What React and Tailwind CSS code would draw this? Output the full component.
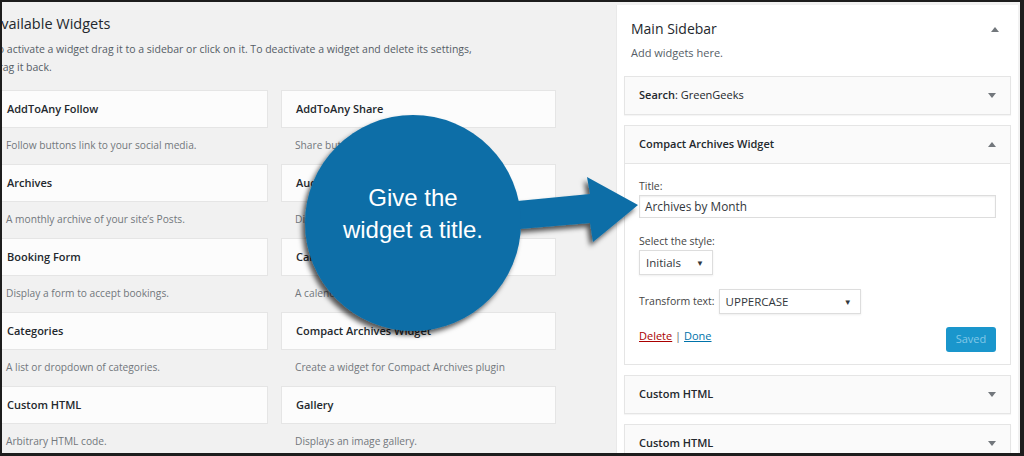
const widgets = [
  { title: 'AddToAny Follow', desc: 'Follow buttons link to your social media.' },
  { title: 'AddToAny Share', desc: 'Share buttons for sharing your content.' },
  { title: 'Archives', desc: "A monthly archive of your site\u2019s Posts." },
  { title: 'Audio', desc: 'Displays an audio player.' },
  { title: 'Booking Form', desc: 'Display a form to accept bookings.' },
  { title: 'Calendar', desc: "A calendar of your site\u2019s Posts." },
  { title: 'Categories', desc: 'A list or dropdown of categories.' },
  { title: 'Compact Archives Widget', desc: 'Create a widget for Compact Archives plugin' },
  { title: 'Custom HTML', desc: 'Arbitrary HTML code.' },
  { title: 'Gallery', desc: 'Displays an image gallery.' },
];

function Caret({ up }) {
  return (
    <svg width="8" height="5" viewBox="0 0 8 5" className="shrink-0">
      {up ? <polygon points="0,5 8,5 4,0" fill="#72777c" /> : <polygon points="0,0 8,0 4,5" fill="#72777c" />}
    </svg>
  );
}

function SidebarWidget({ name, extra, up }) {
  return (
    <div className="h-[39px] border border-[#e5e5e5] bg-[#fafafa] pl-[14px] pr-[14px] flex items-center justify-between shadow-[0_1px_1px_rgba(0,0,0,0.04)]">
      <span className="text-[11px] text-[#23282d]">
        <span className="font-semibold">{name}</span>
        {extra && <span>{extra}</span>}
      </span>
      <Caret up={up} />
    </div>
  );
}

function Callout() {
  return (
    <svg width="1024" height="456" viewBox="0 0 1024 456" className="absolute left-0 top-0 pointer-events-none">
      <defs>
        <filter id="sh" x="-20%" y="-20%" width="140%" height="140%">
          <feDropShadow dx="-3" dy="4" stdDeviation="2.5" floodColor="#000" floodOpacity="0.65" />
        </filter>
      </defs>
      <g filter="url(#sh)" fill="#0c6ea7">
        <polygon points="495,201 588,192 585,175 636,203 591,240 588,221 495,229" />
        <circle cx="411" cy="221" r="108" />
      </g>
      <text x="411" y="204" textAnchor="middle" fill="#fff" fontSize="24" fontFamily="'Liberation Sans', Arial, sans-serif">
        Give the
      </text>
      <text x="411" y="236" textAnchor="middle" fill="#fff" fontSize="24" fontFamily="'Liberation Sans', Arial, sans-serif">
        widget a title.
      </text>
    </svg>
  );
}

export default function App() {
  return (
    <div className="relative w-[1024px] h-[456px] overflow-hidden border-t-2 border-l-2 border-r-4 border-b-[3px] border-[#1d1d1d] font-['Open_Sans',sans-serif]">
      <div className="flex h-full bg-[#f1f1f1]">
        {/* available widgets */}
        <div className="w-[614px] shrink-0 overflow-hidden">
          <div className="ml-[-10px] pt-[12px]">
            <h2 className="text-[14.5px] leading-[20px] text-[#23282d]">Available Widgets</h2>
            <p className="mt-[6px] text-[10.5px] leading-[18px] text-[#555d66] whitespace-nowrap">
              To activate a widget drag it to a sidebar or click on it. To deactivate a widget and delete its settings,
              <br />
              drag it back.
            </p>
            <div className="mt-[14px] grid grid-cols-[276px_275px] gap-x-[13px]">
              {widgets.map((w) => (
                <div key={w.title}>
                  <div className="h-[38px] border border-[#e5e5e5] bg-[#fcfcfc] px-[14px] flex items-center">
                    <span className="text-[11px] font-semibold text-[#23282d]">{w.title}</span>
                  </div>
                  <div className="h-[36px] pt-[10px] pl-[14px] text-[10.2px] leading-[14px] text-[#72777c] whitespace-nowrap">
                    {w.desc}
                  </div>
                </div>
              ))}
            </div>
          </div>
        </div>

        {/* main sidebar */}
        <div className="w-[402px] shrink-0 mt-[3px] bg-white px-[7px] border-l border-[#e9e9e9]">
          <div className="pt-[14px] pl-[7px] pr-[12px] flex items-center justify-between">
            <h2 className="text-[14px] leading-[20px] text-[#23282d]">Main Sidebar</h2>
            <Caret up />
          </div>
          <p className="mt-[6px] pl-[7px] text-[11px] leading-[16px] text-[#555d66]">Add widgets here.</p>

          <div className="mt-[15px]">
            <SidebarWidget name="Search" extra=": GreenGeeks" />
          </div>

          <div className="mt-[10px] border border-[#e5e5e5] bg-white">
            <div className="h-[38px] border-b border-[#e5e5e5] bg-[#fafafa] px-[14px] flex items-center justify-between">
              <span className="text-[11px] font-semibold text-[#23282d]">Compact Archives Widget</span>
              <Caret up />
            </div>
            <div className="px-[14px] pt-[14px] pb-[12px] text-[10.5px] text-[#444]">
              <label className="block leading-[16px]">Title:</label>
              <div className="mt-[1px] h-[23px] border border-[#ddd] shadow-[inset_0_1px_2px_rgba(0,0,0,0.07)] px-[5px] flex items-center text-[11.8px] text-[#32373c]">
                Archives by Month
              </div>
              <label className="block mt-[15px] leading-[16px]">Select the style:</label>
              <div className="mt-[1px] h-[25px] w-[74px] border border-[#ddd] shadow-[0_1px_2px_rgba(0,0,0,0.07)] pl-[6px] pr-[8px] flex items-center justify-between text-[11.5px] text-[#32373c]">
                <span>Initials</span>
                <span className="text-[8px]">▼</span>
              </div>
              <div className="mt-[14px] flex items-center gap-[4px]">
                <span>Transform text:</span>
                <div className="h-[25px] w-[142px] border border-[#ddd] shadow-[0_1px_2px_rgba(0,0,0,0.07)] pl-[6px] pr-[8px] flex items-center justify-between text-[11.5px] text-[#32373c]">
                  <span>UPPERCASE</span>
                  <span className="text-[8px]">▼</span>
                </div>
              </div>
              <div className="mt-[13px] h-[25px] flex items-start justify-between">
                <span className="mt-[1px] text-[11px] leading-[16px]">
                  <span className="text-[#a00] underline">Delete</span>
                  <span className="text-[#666]"> | </span>
                  <span className="text-[#0073aa] underline">Done</span>
                </span>
                <button className="h-[25px] w-[50px] rounded-[3px] bg-[#1a96cc] text-[11px] text-[#82c8e8]">Saved</button>
              </div>
            </div>
          </div>

          <div className="mt-[10px]">
            <SidebarWidget name="Custom HTML" />
          </div>
          <div className="mt-[10px]">
            <SidebarWidget name="Custom HTML" />
          </div>
        </div>
      </div>
      <Callout />
    </div>
  );
}
